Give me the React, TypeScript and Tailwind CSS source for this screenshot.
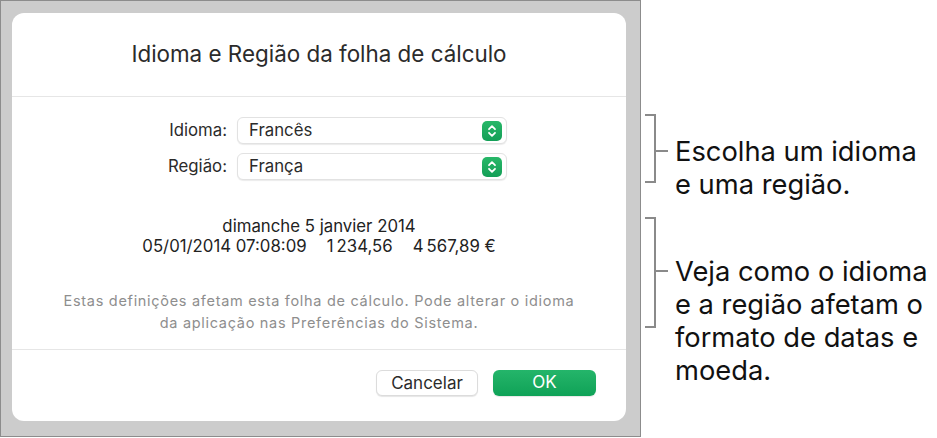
import React from 'react'

const FONT = { fontFamily: 'Inter, Roboto, "Noto Sans", sans-serif' }

function Stepper() {
  return (
    <span className="flex h-[20px] w-[20px] items-center justify-center rounded-[5px] bg-gradient-to-b from-[#27b768] to-[#139f57]">
      <svg width="10" height="14" viewBox="0 0 10 14" fill="none">
        <path d="M2 5.2 5 2.2 8 5.2" stroke="white" strokeWidth="1.8" strokeLinecap="round" strokeLinejoin="round" />
        <path d="M2 8.8 5 11.8 8 8.8" stroke="white" strokeWidth="1.8" strokeLinecap="round" strokeLinejoin="round" />
      </svg>
    </span>
  )
}

function SelectRow({ label, value }: { label: string; value: string }) {
  return (
    <div className="flex items-center">
      <span className="w-[77px] whitespace-nowrap text-right text-[16.8px] text-[#2b2b2b]">{label}</span>
      <div className="ml-[10px] flex h-[27px] w-[270px] items-center justify-between rounded-[6px] border border-[#e2e2e2] bg-white pl-[11px] pr-[4px] shadow-[0_1px_1px_rgba(0,0,0,0.08)]">
        <span className="text-[16.8px] text-[#2b2b2b]">{value}</span>
        <Stepper />
      </div>
    </div>
  )
}

function Bracket({ height, tick }: { height: number; tick: number }) {
  return (
    <svg width="25" height={height} viewBox={`0 0 25 ${height}`} className="shrink-0">
      <path
        d={`M0 1H10V${height - 1}H0 M10 ${tick}H23`}
        stroke="#8a8a8a"
        strokeWidth="2"
        fill="none"
      />
    </svg>
  )
}

export default function App() {
  return (
    <div className="flex h-[438px] w-[937px] bg-white" style={FONT}>
      <div className="h-[437px] w-[641px] shrink-0 border border-[#8c8c8c] bg-[#cccccc] pl-[11px] pt-[12px]">
        <div className="flex h-[408px] w-[614px] flex-col rounded-[12px] bg-white">
          <div className="flex h-[84px] items-center justify-center border-b border-[#e6e6e6] pb-[2px]">
            <h1 className="text-[22.4px] text-[#2b2b2b]">Idioma e Região da folha de cálculo</h1>
          </div>

          <div className="flex flex-1 flex-col border-b border-[#e6e6e6] pt-[20px]">
            <div className="ml-[138px] flex flex-col gap-[9px]">
              <SelectRow label="Idioma:" value="Francês" />
              <SelectRow label="Região:" value="França" />
            </div>

            <div className="mt-[36px] text-center text-[16.8px] leading-[20px] text-[#222]">
              <p>dimanche 5 janvier 2014</p>
              <p className="flex justify-center gap-[20px] whitespace-nowrap">
                <span>05/01/2014 07:08:09</span>
                <span>1{'\u202f'}234,56</span>
                <span>4{'\u202f'}567,89 €</span>
              </p>
            </div>

            <p className="mt-[34px] text-center text-[14.5px] leading-[22px] tracking-[0.7px] text-[#8e8e8e]">
              Estas definições afetam esta folha de cálculo. Pode alterar o idioma
              <br />
              da aplicação nas Preferências do Sistema.
            </p>
          </div>

          <div className="flex h-[71px] items-start justify-end gap-[15px] pr-[30px] pt-[20px]">
            <button className="h-[26px] w-[102px] rounded-[6px] border border-[#dcdcdc] bg-white text-[17px] text-[#2b2b2b] shadow-[0_1px_1px_rgba(0,0,0,0.1)]">
              Cancelar
            </button>
            <button className="h-[26px] w-[103px] rounded-[6px] bg-gradient-to-b from-[#24b56a] to-[#0ea257] text-[17px] text-white shadow-[0_1px_1px_rgba(0,0,0,0.1)]">
              OK
            </button>
          </div>
        </div>
      </div>

      <div className="flex flex-col pl-[4px] pt-[114px] text-[27.3px] leading-[33px] text-[#111]">
        <div className="flex items-start">
          <Bracket height={69} tick={37} />
          <p className="ml-[5px] mt-[21px] whitespace-nowrap">
            Escolha um idioma
            <br />
            e uma região.
          </p>
        </div>
        <div className="mt-[16px] flex items-start">
          <Bracket height={111} tick={54} />
          <p className="ml-[5px] mt-[38px] whitespace-nowrap">
            Veja como o idioma
            <br />
            e a região afetam o
            <br />
            formato de datas e
            <br />
            moeda.
          </p>
        </div>
      </div>
    </div>
  )
}
